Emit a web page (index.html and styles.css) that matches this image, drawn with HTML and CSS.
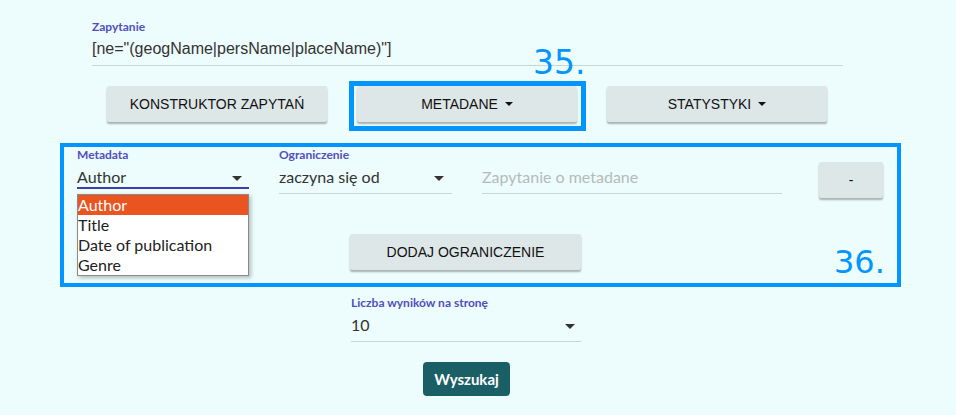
FILE: index.html
```html
<!DOCTYPE html>
<html lang="pl">
<head>
<meta charset="utf-8">
<title>Wyszukiwanie</title>
<link rel="stylesheet" href="styles.css">
</head>
<body>
<main class="page">
  <section class="query">
    <label class="lbl">Zapytanie</label>
    <div class="query-text">[ne="(geogName|persName|placeName)"]</div>
  </section>

  <div class="tabs">
    <button class="btn tab">KONSTRUKTOR ZAPYTAŃ</button>
    <div class="mark">
      <button class="btn tab">METADANE <span class="caret"></span></button>
      <span class="num num35">35.</span>
    </div>
    <button class="btn tab">STATYSTYKI <span class="caret"></span></button>
  </div>

  <section class="filters">
    <div class="filter-row">
      <div class="field field-meta">
        <label class="lbl">Metadata</label>
        <div class="select focus"><span>Author</span><span class="arrow arrow-meta"></span></div>
        <ul class="dropdown">
          <li class="active">Author</li>
          <li>Title</li>
          <li>Date of publication</li>
          <li>Genre</li>
        </ul>
      </div>
      <div class="field field-ogr">
        <label class="lbl">Ograniczenie</label>
        <div class="select"><span>zaczyna się od</span><span class="arrow"></span></div>
      </div>
      <div class="field field-input">
        <div class="input">Zapytanie o metadane</div>
      </div>
      <button class="btn btn-minus">-</button>
    </div>
    <div class="add-row">
      <button class="btn btn-add">DODAJ OGRANICZENIE</button>
    </div>
    <span class="num num36">36.</span>
  </section>

  <section class="perpage">
    <label class="lbl">Liczba wyników na stronę</label>
    <div class="select"><span>10</span><span class="arrow arrow-pp"></span></div>
  </section>

  <button class="search">Wyszukaj</button>
</main>
</body>
</html>
```

FILE: styles.css
```css
* { box-sizing: border-box; }

body {
  margin: 0;
  background: #edfcfc;
  font-family: Lato, "Noto Sans", sans-serif;
  color: #333;
}

.page {
  width: 956px;
  height: 415px;
  padding-top: 20px;
  overflow: hidden;
}

.lbl {
  display: block;
  font: 700 12px/13px Lato, sans-serif;
  color: #4f4fc0;
  white-space: nowrap;
}

.query {
  margin-left: 92px;
  width: 751px;
}

.query .lbl { margin-bottom: 6px; }

.query-text {
  font: 16px/20px "Liberation Sans", Arial, sans-serif;
  color: #333;
  padding-bottom: 6px;
  border-bottom: 1px solid #c9d6d6;
}

.tabs {
  display: flex;
  gap: 30px;
  margin: 20px 0 0 107px;
}

.btn {
  font: 14px/20px "Liberation Sans", Arial, sans-serif;
  color: #111;
  background: #dee7e7;
  border: 0;
  border-radius: 2px;
  box-shadow: 0 2px 2px rgba(0, 0, 0, 0.3);
  height: 36px;
  padding: 0;
  display: flex;
  align-items: center;
  justify-content: center;
  gap: 7px;
}

.tab { width: 220px; }

.caret {
  width: 0;
  height: 0;
  border-left: 4px solid transparent;
  border-right: 4px solid transparent;
  border-top: 4px solid #111;
}

.mark {
  position: relative;
  display: flex;
}

.mark::after {
  content: "";
  position: absolute;
  top: -5px;
  left: -8px;
  right: -9px;
  bottom: -9px;
  border: 5px solid #0095ff;
  pointer-events: none;
}

.num {
  position: absolute;
  font-family: "DejaVu Sans", sans-serif;
  color: #0095ff;
  white-space: nowrap;
}

.num35 {
  font-size: 33px;
  line-height: 33px;
  left: 176px;
  top: -40px;
}

.filters {
  position: relative;
  margin: 21px 0 0 60px;
  width: 841px;
  border: 4px solid #0095ff;
  padding: 1px 0 13px 13px;
}

.num36 {
  font-size: 32px;
  line-height: 32px;
  left: 770px;
  top: 99px;
}

.filter-row {
  display: flex;
  align-items: flex-start;
}

.field { position: relative; }
.field-meta { width: 172px; margin-right: 30px; }
.field-ogr { width: 173px; margin-right: 30px; }
.field-input { width: 300px; margin-right: 37px; padding-top: 19px; }

.select {
  margin-top: 6px;
  height: 27px;
  border-bottom: 1px solid #c9d6d6;
  display: flex;
  justify-content: space-between;
  align-items: flex-start;
  font: 16px/20px Lato, sans-serif;
  color: #333;
}

.select.focus {
  height: 22px;
  border-bottom: 2px solid #3d3db3;
}

.arrow {
  width: 0;
  height: 0;
  margin-top: 9px;
  margin-right: 8px;
  border-left: 5px solid transparent;
  border-right: 5px solid transparent;
  border-top: 5px solid #333;
}

.arrow-meta { margin-right: 7px; }
.arrow-pp { margin-right: 6px; }

.input {
  height: 27px;
  border-bottom: 1px solid #c9d6d6;
  font: 16px/20px Lato, sans-serif;
  color: #b3bbbb;
}

.dropdown {
  position: absolute;
  top: 46px;
  left: 0;
  width: 172px;
  margin: 0;
  padding: 0;
  list-style: none;
  background: #fff;
  border: 1px solid #8a8a8a;
  box-shadow: 2px 2px 4px rgba(0, 0, 0, 0.25);
  font: 16px/20px Lato, sans-serif;
  color: #222;
  z-index: 2;
}

.dropdown li { height: 20px; white-space: nowrap; }

.dropdown li.active {
  background: #e95420;
  color: #fff;
}

.btn-minus {
  width: 64px;
  margin-top: 14px;
}

.add-row {
  margin: 36px 0 0 273px;
}

.btn-add { width: 231px; }

.perpage {
  margin: 9px 0 0 351px;
  width: 230px;
}

.search {
  display: block;
  margin: 20px 0 0 423px;
  height: 34px;
  width: 87px;
  padding: 0;
  border: 0;
  border-radius: 4px;
  background: #1b5f66;
  color: #fff;
  font: 700 15px/20px Lato, sans-serif;
}
```
